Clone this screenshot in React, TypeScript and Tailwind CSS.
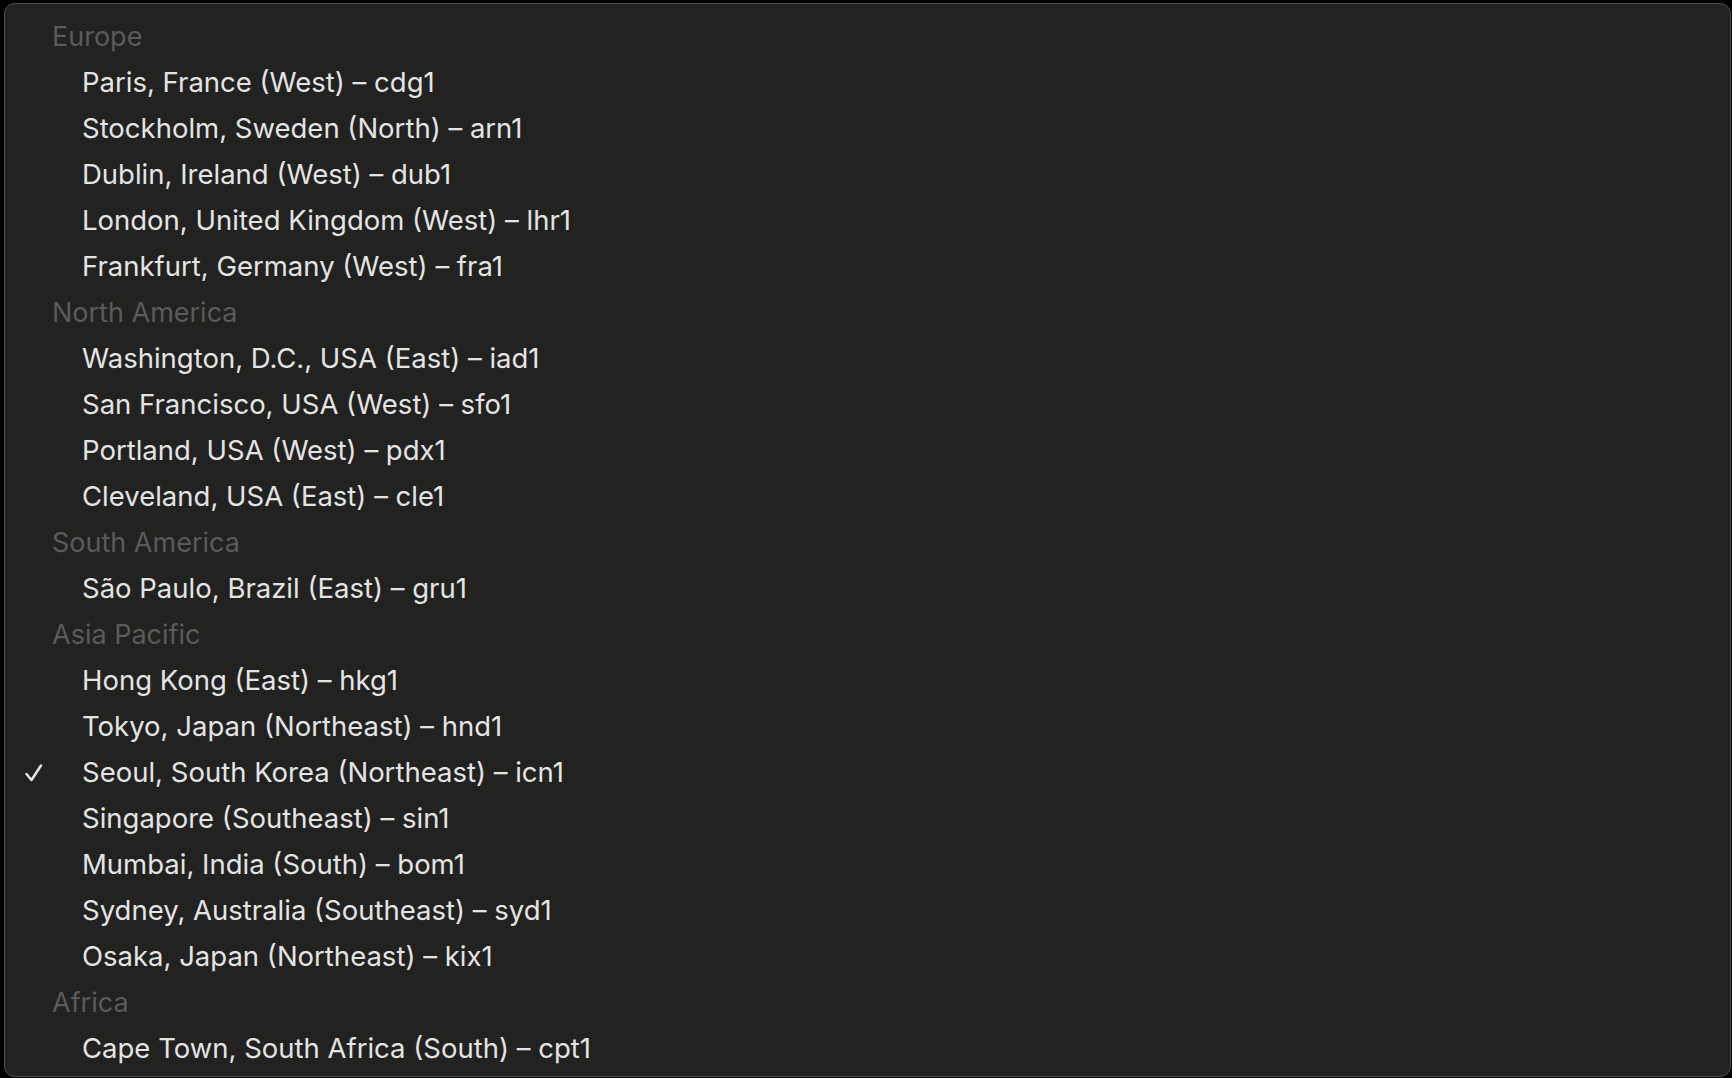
import React from "react";

type Row = { kind: "h"; label: string } | { kind: "i"; label: string; checked?: boolean };

const rows: Row[] = [
  { kind: "h", label: "Europe" },
  { kind: "i", label: "Paris, France (West) – cdg1" },
  { kind: "i", label: "Stockholm, Sweden (North) – arn1" },
  { kind: "i", label: "Dublin, Ireland (West) – dub1" },
  { kind: "i", label: "London, United Kingdom (West) – lhr1" },
  { kind: "i", label: "Frankfurt, Germany (West) – fra1" },
  { kind: "h", label: "North America" },
  { kind: "i", label: "Washington, D.C., USA (East) – iad1" },
  { kind: "i", label: "San Francisco, USA (West) – sfo1" },
  { kind: "i", label: "Portland, USA (West) – pdx1" },
  { kind: "i", label: "Cleveland, USA (East) – cle1" },
  { kind: "h", label: "South America" },
  { kind: "i", label: "São Paulo, Brazil (East) – gru1" },
  { kind: "h", label: "Asia Pacific" },
  { kind: "i", label: "Hong Kong (East) – hkg1" },
  { kind: "i", label: "Tokyo, Japan (Northeast) – hnd1" },
  { kind: "i", label: "Seoul, South Korea (Northeast) – icn1", checked: true },
  { kind: "i", label: "Singapore (Southeast) – sin1" },
  { kind: "i", label: "Mumbai, India (South) – bom1" },
  { kind: "i", label: "Sydney, Australia (Southeast) – syd1" },
  { kind: "i", label: "Osaka, Japan (Northeast) – kix1" },
  { kind: "h", label: "Africa" },
  { kind: "i", label: "Cape Town, South Africa (South) – cpt1" },
];

export default function App() {
  return (
    <div className="w-[1732px] h-[1078px] bg-black pt-[3px] pl-[4px] pr-[1px] pb-[1px] overflow-hidden font-['Inter',sans-serif]">
      <div className="h-full w-full rounded-[11px] border border-[#4e4e4e] bg-[#222221] pt-[10px] flex flex-col">
        {rows.map((r, idx) =>
          r.kind === "h" ? (
            <div key={idx} className="h-[46px] shrink-0 flex items-center pl-[47px] pb-[2px] text-[27px] text-[#5b5b5b] leading-none">
              {r.label}
            </div>
          ) : (
            <div key={idx} className="h-[46px] shrink-0 flex items-center text-[27.5px] text-[#e4e4e4] leading-none">
              <span className="w-[77px] shrink-0 pl-[19px] flex items-center">
                {r.checked ? (
                  <svg width="20" height="20" viewBox="0 0 20 20" fill="none">
                    <path d="M2.5 11 L7.5 17 L17 2.5" stroke="#e4e4e4" strokeWidth="2.5" strokeLinecap="round" strokeLinejoin="round" />
                  </svg>
                ) : null}
              </span>
              <span>{r.label}</span>
            </div>
          )
        )}
      </div>
    </div>
  );
}
